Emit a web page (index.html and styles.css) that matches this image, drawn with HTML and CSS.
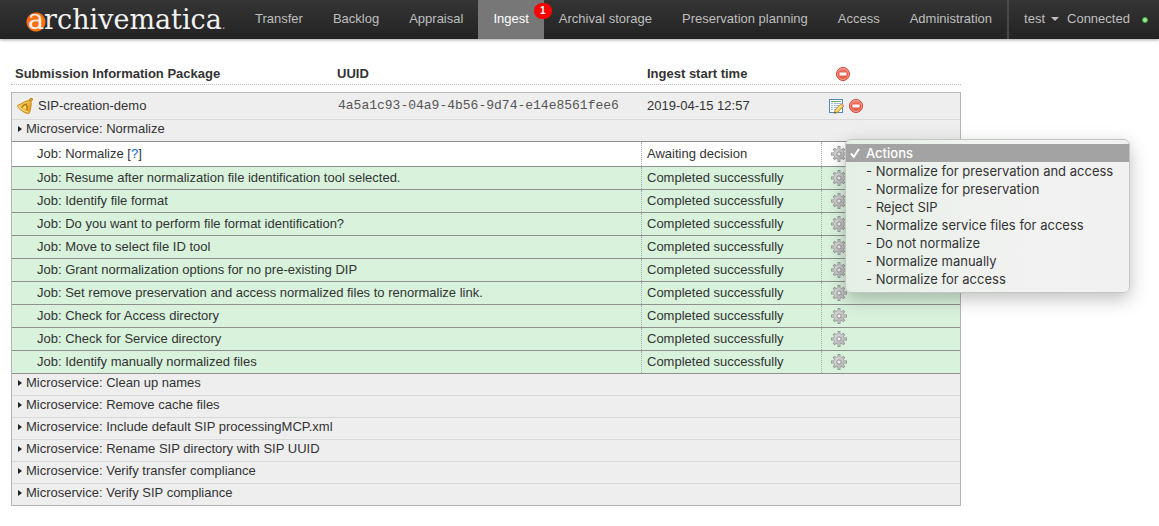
FILE: index.html
```html
<!DOCTYPE html>
<html lang="en">
<head>
<meta charset="utf-8">
<title>Archivematica Dashboard - Ingest</title>
<link rel="stylesheet" href="styles.css">
</head>
<body>
<svg class="sprite" aria-hidden="true">
  <defs>
    <linearGradient id="red" x1="0" y1="0" x2="0" y2="1"><stop offset="0" stop-color="#f3907f"/><stop offset=".5" stop-color="#e4523f"/><stop offset="1" stop-color="#e8705a"/></linearGradient>
    <linearGradient id="steel" x1="0" y1="0" x2="1" y2="1"><stop offset="0" stop-color="#dedede"/><stop offset="1" stop-color="#b0b0b0"/></linearGradient>
    <linearGradient id="gold" x1="0" y1="0" x2="1" y2="1"><stop offset="0" stop-color="#ffdc66"/><stop offset="1" stop-color="#d9920f"/></linearGradient>
    <symbol id="remove" viewBox="0 0 16 16">
      <circle cx="8" cy="8" r="6.5" fill="url(#red)" stroke="#cf4437"/>
      <circle cx="8" cy="8" r="5.5" fill="none" stroke="#f6a79b" stroke-width=".8"/>
      <rect x="4.5" y="6.5" width="7" height="3" fill="#fff"/>
    </symbol>
    <symbol id="gear" viewBox="0 0 16 16">
      <g stroke="#8e8e8e" stroke-width="2.8"><path d="M8 0v16M0 8h16M2.700 2.700l10.600 10.600M13.300 2.700L2.700 13.300"/></g>
      <circle cx="8" cy="8" r="5.500" fill="#999"/>
      <g stroke="#c9c9c9" stroke-width="1.400"><path d="M8 .7v14.600M.7 8h14.600M3.200 3.200l9.600 9.600M12.800 3.200l-9.600 9.600"/></g>
      <circle cx="8" cy="8" r="5" fill="url(#steel)"/>
      <circle cx="8" cy="8" r="2.100" fill="#eef1ee" stroke="#8f8f8f" stroke-width=".9"/>
    </symbol>
    <symbol id="bell" viewBox="0 0 16 16">
      <path d="M12 2.300l1.300-1.800h2l.2 1.600-1.700 1.500z" fill="#e6a822" stroke="#b0760f" stroke-width=".8"/>
      <path d="M13.600 2.600C10.800 2.300 8.200 3.200 6 4.700 4 6 2 6.800.7 7.300c-.5 1.200 1.600 3.800 4.700 5.900 2.700 1.800 5.900 2.800 6.900 2 .8-1.700 1.100-3.600 1.500-5.500.5-2.300.6-5.200-.2-7.100z" fill="url(#gold)" stroke="#c4871a" stroke-width=".9"/>
      <path d="M1.800 7.900c1.600 2.600 5.900 5.800 9.800 6.300" fill="none" stroke="#ffe88f"/>
      <path d="M4.700 9.700c.8-1.600 2.600-3.200 4.500-3.600.9 1.600 1.300 4 .9 6" fill="none" stroke="#a86d12" stroke-width="1.100"/>
      <path d="M6.200 9.800l2.300-2 .6 3.300z" fill="#ffe58a"/>
    </symbol>
    <symbol id="report" viewBox="0 0 16 16">
      <rect x="1.500" y="1.500" width="13" height="13" fill="#fff" stroke="#4f86c6"/>
      <path d="M3 3.500h10" stroke="#69ab62"/>
      <path d="M3 5.500h2m1 0h7M3 7.500h2m1 0h5M3 9.500h2m1 0h3M3 11.500h2m1 0h2" stroke="#9dbde4"/>
      <path d="M6.500 15.300l.6-3.300 6.200-6.200 2.400 2.300-6.300 6.400z" fill="#f8cf55" stroke="#a97425" stroke-width=".8"/>
      <path d="M8.200 12.700l5.700-5.800" stroke="#fff1a8"/>
      <path d="M12.500 6.500l1.300-1.300 2 2-1.200 1.300z" fill="#e9a56f"/>
      <path d="M6.500 15.300l.4-1.600 1.200 1.200z" fill="#333"/>
    </symbol>
  </defs>
</svg>

<header class="topbar">
  <a class="brand" href="#">archivematica<span class="brand-dot">.</span></a>
  <nav class="nav">
    <a href="#">Transfer</a>
    <a href="#">Backlog</a>
    <a href="#">Appraisal</a>
    <a class="active" href="#">Ingest<span class="badge">1</span></a>
    <a href="#">Archival storage</a>
    <a href="#">Preservation planning</a>
    <a href="#">Access</a>
    <a href="#">Administration</a>
  </nav>
  <div class="session">
    <button class="user" type="button">test<span class="caret"></span></button>
    <span>Connected</span>
    <span class="status-dot"></span>
  </div>
</header>

<main class="content">
  <table class="packages">
    <thead>
      <tr>
        <th>Submission Information Package</th>
        <th class="uuid-heading">UUID</th>
        <th>Ingest start time</th>
        <th class="tools"><button class="icon-button" type="button" aria-label="Remove all"><svg><use href="#remove"/></svg></button></th>
      </tr>
    </thead>
    <tbody>
      <tr class="package">
        <td class="name"><svg><use href="#bell"/></svg>SIP-creation-demo</td>
        <td class="uuid">4a5a1c93-04a9-4b56-9d74-e14e8561fee6</td>
        <td>2019-04-15 12:57</td>
        <td class="tools"><button class="icon-button" type="button" aria-label="Report"><svg><use href="#report"/></svg></button><button class="icon-button" type="button" aria-label="Remove"><svg><use href="#remove"/></svg></button></td>
      </tr>
      <tr class="service open"><td colspan="4"><button type="button">Microservice: Normalize</button></td></tr>
      <tr class="job waiting">
        <td colspan="2">Job: Normalize [<a href="#">?</a>]</td>
        <td>Awaiting decision</td>
        <td class="tools"><button class="icon-button" type="button" aria-label="Tasks"><svg><use href="#gear"/></svg></button>
          <div class="menu" role="listbox" aria-label="Actions">
            <button type="button" role="option" aria-selected="true"><svg class="check" viewBox="0 0 12 12"><path d="M2 6.500l2.800 3.300L10 2"/></svg>Actions</button>
            <button type="button" role="option">- Normalize for preservation and access</button>
            <button type="button" role="option">- Normalize for preservation</button>
            <button type="button" role="option">- Reject SIP</button>
            <button type="button" role="option">- Normalize service files for access</button>
            <button type="button" role="option">- Do not normalize</button>
            <button type="button" role="option">- Normalize manually</button>
            <button type="button" role="option">- Normalize for access</button>
          </div>
        </td>
      </tr>
      <tr class="job"><td colspan="2">Job: Resume after normalization file identification tool selected.</td><td>Completed successfully</td><td class="tools"><button class="icon-button" type="button" aria-label="Tasks"><svg><use href="#gear"/></svg></button></td></tr>
      <tr class="job"><td colspan="2">Job: Identify file format</td><td>Completed successfully</td><td class="tools"><button class="icon-button" type="button" aria-label="Tasks"><svg><use href="#gear"/></svg></button></td></tr>
      <tr class="job"><td colspan="2">Job: Do you want to perform file format identification?</td><td>Completed successfully</td><td class="tools"><button class="icon-button" type="button" aria-label="Tasks"><svg><use href="#gear"/></svg></button></td></tr>
      <tr class="job"><td colspan="2">Job: Move to select file ID tool</td><td>Completed successfully</td><td class="tools"><button class="icon-button" type="button" aria-label="Tasks"><svg><use href="#gear"/></svg></button></td></tr>
      <tr class="job"><td colspan="2">Job: Grant normalization options for no pre-existing DIP</td><td>Completed successfully</td><td class="tools"><button class="icon-button" type="button" aria-label="Tasks"><svg><use href="#gear"/></svg></button></td></tr>
      <tr class="job"><td colspan="2">Job: Set remove preservation and access normalized files to renormalize link.</td><td>Completed successfully</td><td class="tools"><button class="icon-button" type="button" aria-label="Tasks"><svg><use href="#gear"/></svg></button></td></tr>
      <tr class="job"><td colspan="2">Job: Check for Access directory</td><td>Completed successfully</td><td class="tools"><button class="icon-button" type="button" aria-label="Tasks"><svg><use href="#gear"/></svg></button></td></tr>
      <tr class="job"><td colspan="2">Job: Check for Service directory</td><td>Completed successfully</td><td class="tools"><button class="icon-button" type="button" aria-label="Tasks"><svg><use href="#gear"/></svg></button></td></tr>
      <tr class="job"><td colspan="2">Job: Identify manually normalized files</td><td>Completed successfully</td><td class="tools"><button class="icon-button" type="button" aria-label="Tasks"><svg><use href="#gear"/></svg></button></td></tr>
      <tr class="service"><td colspan="4"><button type="button">Microservice: Clean up names</button></td></tr>
      <tr class="service"><td colspan="4"><button type="button">Microservice: Remove cache files</button></td></tr>
      <tr class="service"><td colspan="4"><button type="button">Microservice: Include default SIP processingMCP.xml</button></td></tr>
      <tr class="service"><td colspan="4"><button type="button">Microservice: Rename SIP directory with SIP UUID</button></td></tr>
      <tr class="service"><td colspan="4"><button type="button">Microservice: Verify transfer compliance</button></td></tr>
      <tr class="service"><td colspan="4"><button type="button">Microservice: Verify SIP compliance</button></td></tr>
    </tbody>
  </table>
</main>
</body>
</html>
```
FILE: styles.css
```css
* { box-sizing: border-box; }

body {
  margin: 0;
  background: #fff;
  color: #333;
  font: 13px/18px "Liberation Sans", Arial, sans-serif;
}

button {
  margin: 0;
  padding: 0;
  border: 0;
  background: none;
  color: inherit;
  font: inherit;
  text-align: left;
  cursor: pointer;
}

.sprite {
  position: absolute;
  width: 0;
  height: 0;
}

/* Top bar */
.topbar {
  display: flex;
  align-items: stretch;
  background: linear-gradient(#353535, #222);
  box-shadow: 0 1px 3px rgba(0, 0, 0, .35);
  color: #bfbfbf;
  white-space: nowrap;
}

.brand {
  display: flex;
  align-items: baseline;
  width: 240px;
  padding-left: 28px;
  background: radial-gradient(circle at 36px 22px, #ff6f0f 9px, transparent 10px);
  color: #f2f2f2;
  font: 27px/39px "DejaVu Serif", serif;
  text-decoration: none;
}

.brand-dot {
  color: #999;
  font-size: 12px;
  line-height: 18px;
}

.nav { display: flex; }

.nav a {
  padding: 10px 15px 11px;
  color: #bfbfbf;
  text-decoration: none;
}

.nav .active {
  position: relative;
  background: #777;
  color: #fff;
}

.badge {
  position: absolute;
  top: 3px;
  right: -8px;
  width: 18px;
  border-radius: 8px;
  background: #f00;
  color: #fff;
  font-size: 10px;
  font-weight: bold;
  line-height: 16px;
  text-align: center;
}

.session {
  display: flex;
  flex: 1;
  align-items: center;
  gap: 8px;
  padding: 0 11px 2px 15px;
  border-left: 2px solid #484848;
}

.user {
  display: flex;
  align-items: center;
  gap: 6px;
}

.caret {
  border: 4px solid transparent;
  border-top-color: #bfbfbf;
  border-bottom: 0;
}

.status-dot {
  width: 6px;
  height: 6px;
  margin: 2px 0 0 auto;
  border: 1px solid #3faa3f;
  border-radius: 50%;
  background: #9be89b;
}

/* Package list */
.content {
  max-width: 972px;
  padding: 26px 11px 20px;
}

.packages {
  display: block;
}

.packages thead {
  display: block;
  margin-bottom: 7px;
  padding: 0 1px;
  border-bottom: 1px dotted #bbb;
}

.packages tbody {
  display: block;
  border: 1px solid #b5b5b5;
}

.packages tr {
  display: grid;
  grid-template-columns: 325fr 304fr 180fr 139fr;
}

th,
td {
  padding: 0 0 0 6px;
  text-align: left;
}

th {
  padding-bottom: 1px;
}

th:first-child { padding-left: 3px; }

.uuid-heading { padding-left: 0; }

.tools {
  display: flex;
  align-items: center;
  gap: 4px;
}

th.tools { padding-left: 14px; }

.icon-button,
.icon-button svg,
.name svg {
  display: block;
  width: 16px;
  height: 16px;
}

.package {
  border-bottom: 1px solid #d8d8d8;
  background: #eee;
}

.package td {
  padding-top: 4px;
  padding-bottom: 4px;
}

.package .name {
  display: flex;
  align-items: center;
  gap: 5px;
  padding-left: 5px;
}

.package .uuid {
  padding-left: 1px;
  color: #555;
  font-family: "Liberation Mono", "Courier New", monospace;
}

.package .tools { padding-left: 7px; }

.service {
  border-bottom: 1px solid #d8d8d8;
  background: #eee;
}

.service:last-child { border-bottom: 0; }
.service.open { border-bottom-color: #8f8f8f; }

.service td {
  grid-column: 1 / -1;
  padding-bottom: 3px;
}

.service button {
  display: flex;
  align-items: center;
  gap: 4px;
}

.service button::before {
  border: 3px solid transparent;
  border-left: 4px solid #222;
  border-right: 0;
  content: "";
}

.job {
  border-bottom: 1px solid #8f8f8f;
  background: #d8f2dc;
}

.job td {
  padding-top: 2px;
  padding-bottom: 2px;
}

.job.waiting { background: #fff; }

.job.waiting td {
  padding-top: 3px;
  padding-bottom: 3px;
}

.job td:first-child {
  grid-column: span 2;
  padding-left: 25px;
}

.job td + td {
  padding-left: 5px;
  border-left: 1px dotted #aaa;
}

.job .tools,
.job.waiting .tools {
  position: relative;
  padding: 0 0 0 9px;
}

.job a {
  color: #0069d6;
  text-decoration: none;
}

/* Action picker */
.menu {
  position: absolute;
  z-index: 1;
  top: -3px;
  left: 23px;
  width: 285px;
  padding: 4px 0;
  border: 1px solid #c3c6c3;
  border-radius: 6px;
  background: linear-gradient(90deg, #e3efe4, #f0f2f0 45%, #f1f1f1);
  box-shadow: 0 6px 18px rgba(0, 0, 0, .25);
  font: 13px/18px Inter, sans-serif;
}

.menu button {
  display: block;
  position: relative;
  width: 100%;
  padding-left: 20px;
}

.menu [aria-selected="true"] {
  background: #a3a3a3;
  color: #fff;
  font-weight: 500;
}

.check {
  position: absolute;
  top: 3px;
  left: 3px;
  width: 12px;
  height: 12px;
  fill: none;
  stroke: #fff;
  stroke-width: 2;
}
```
